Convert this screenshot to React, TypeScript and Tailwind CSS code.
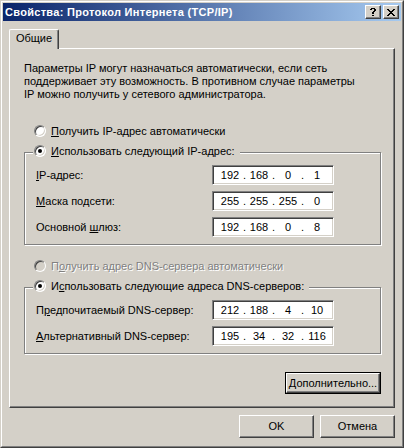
import { Fragment, type ReactNode } from 'react'

const raised =
  'bg-[#D4D0C8] border border-t-white border-l-white border-r-[#404040] border-b-[#404040] shadow-[inset_-1px_-1px_0_#808080]'
const sunken =
  'border border-t-[#808080] border-l-[#808080] border-r-white border-b-white shadow-[inset_1px_1px_0_#404040,inset_-1px_-1px_0_#D4D0C8]'
const etched = 'border border-[#808080] shadow-[inset_1px_1px_0_#fff,1px_1px_0_#fff]'

function Radio({ checked, disabled }: { checked?: boolean; disabled?: boolean }) {
  return (
    <span
      className={`w-3 h-3 shrink-0 rounded-full flex items-center justify-center ${sunken} ${
        disabled ? 'bg-[#D4D0C8]' : 'bg-white'
      }`}
    >
      {checked && <span className="w-1 h-1 rounded-full bg-black" />}
    </span>
  )
}

function IpField({ parts }: { parts: string[] }) {
  return (
    <div className={`w-[122px] h-5 bg-white flex items-center pl-[5px] ${sunken}`}>
      {parts.map((p, i) => (
        <Fragment key={i}>
          {i > 0 && <span className="w-[5px] text-center">.</span>}
          <span className="w-6 text-center">{p}</span>
        </Fragment>
      ))}
    </div>
  )
}

function Row({ label, parts }: { label: ReactNode; parts: string[] }) {
  return (
    <div className="flex items-center">
      <span className="w-[176px]">{label}</span>
      <IpField parts={parts} />
    </div>
  )
}

function Group({ legend, children }: { legend: ReactNode; children: ReactNode }) {
  return (
    <div className={`relative w-[357px] pl-[11px] pt-3 pb-[7px] flex flex-col gap-[6px] ${etched}`}>
      <div className="absolute -top-2 left-[8px] h-3 pl-px pr-[5px] bg-[#D4D0C8] flex items-center gap-[5px]">
        <Radio checked />
        <span className="whitespace-nowrap">{legend}</span>
      </div>
      {children}
    </div>
  )
}

function TitleButton({ children }: { children: ReactNode }) {
  return <div className={`w-4 h-[14px] flex items-center justify-center ${raised}`}>{children}</div>
}

function PushButton({ children, width }: { children: ReactNode; width: string }) {
  return <button className={`${width} h-[23px] flex items-center justify-center ${raised}`}>{children}</button>
}

export default function App() {
  return (
    <div className="w-[404px] h-[448px] bg-[#D4D0C8] border border-t-[#D4D0C8] border-l-[#D4D0C8] border-r-[#404040] border-b-[#404040] font-['Liberation_Sans',Arial,sans-serif] text-[11px] leading-[13px] text-black select-none">
      <div className="h-full border border-t-white border-l-white border-r-[#808080] border-b-[#808080] p-px flex flex-col">
        {/* title bar */}
        <div className="h-[18px] shrink-0 bg-[linear-gradient(to_right,#0A246A,#A6CAF0)] flex items-center pl-[2px] pr-[2px]">
          <span className="flex-1 text-white font-bold tracking-[0.3px] whitespace-nowrap">
            Свойства: Протокол Интернета (TCP/IP)
          </span>
          <div className="flex gap-[2px]">
            <TitleButton>
              <svg width="6" height="8" viewBox="0 0 6 8" shapeRendering="crispEdges">
                <path d="M1 0h4v1H1zM0 1h2v1H0zM4 1h2v2H4zM3 3h2v1H3zM2 4h2v2H2zM2 7h2v1H2z" fill="#000" />
              </svg>
            </TitleButton>
            <TitleButton>
              <svg width="8" height="7" viewBox="0 0 8 7" shapeRendering="crispEdges">
                <path
                  d="M0 0h2v1H0zM6 0h2v1H6zM1 1h2v1H1zM5 1h2v1H5zM2 2h4v1H2zM3 3h2v1H3zM2 4h4v1H2zM1 5h2v1H1zM5 5h2v1H5zM0 6h2v1H0zM6 6h2v1H6z"
                  fill="#000"
                />
              </svg>
            </TitleButton>
          </div>
        </div>

        {/* tab */}
        <div className="mt-2 ml-[6px] relative z-10 -mb-px w-[50px] h-5 bg-[#D4D0C8] border border-b-0 border-t-white border-l-white border-r-[#404040] rounded-t-[2px] shadow-[inset_-1px_0_0_#808080] pt-[2px] text-center">
          Общие
        </div>

        {/* panel */}
        <div className="ml-[6px] w-[386px] h-[360px] shrink-0 border border-t-white border-l-white border-r-[#404040] border-b-[#404040] shadow-[inset_-1px_-1px_0_#808080] pl-[14px] pt-[13px] flex flex-col">
          <p className="whitespace-nowrap">
            Параметры IP могут назначаться автоматически, если сеть
            <br />
            поддерживает эту возможность. В противном случае параметры
            <br />
            IP можно получить у сетевого администратора.
          </p>

          <div className="mt-6 h-3 ml-[10px] flex items-center gap-[5px]">
            <Radio />
            <span>
              <u>П</u>олучить IP-адрес автоматически
            </span>
          </div>

          <div className="mt-[15px]">
            <Group
              legend={
                <>
                  <u>И</u>спользовать следующий IP-адрес:
                </>
              }
            >
              <Row
                label={
                  <>
                    <u>I</u>P-адрес:
                  </>
                }
                parts={['192', '168', '0', '1']}
              />
              <Row
                label={
                  <>
                    <u>М</u>аска подсети:
                  </>
                }
                parts={['255', '255', '255', '0']}
              />
              <Row
                label={
                  <>
                    Основной <u>ш</u>люз:
                  </>
                }
                parts={['192', '168', '0', '8']}
              />
            </Group>
          </div>

          <div className="mt-[15px] h-3 ml-[10px] flex items-center gap-[5px]">
            <Radio disabled />
            <span className="text-[#808080] [text-shadow:1px_1px_0_#fff]">
              П<u>о</u>лучить адрес DNS-сервера автоматически
            </span>
          </div>

          <div className="mt-[15px]">
            <Group
              legend={
                <>
                  И<u>с</u>пользовать следующие адреса DNS-серверов:
                </>
              }
            >
              <Row
                label={
                  <>
                    П<u>р</u>едпочитаемый DNS-сервер:
                  </>
                }
                parts={['212', '188', '4', '10']}
              />
              <Row
                label={
                  <>
                    <u>А</u>льтернативный DNS-сервер:
                  </>
                }
                parts={['195', '34', '32', '116']}
              />
            </Group>
          </div>

          <div className="mt-[18px] ml-[261px] w-[96px] h-[22px] border border-black">
            <button className={`w-full h-full flex items-center justify-center ${raised}`}>
              <span>
                <u>Д</u>ополнительно...
              </span>
            </button>
          </div>
        </div>

        {/* dialog buttons */}
        <div className="mt-[7px] ml-[6px] w-[386px] flex justify-end gap-[6px]">
          <PushButton width="w-[75px]">OK</PushButton>
          <PushButton width="w-[75px]">Отмена</PushButton>
        </div>
      </div>
    </div>
  )
}
